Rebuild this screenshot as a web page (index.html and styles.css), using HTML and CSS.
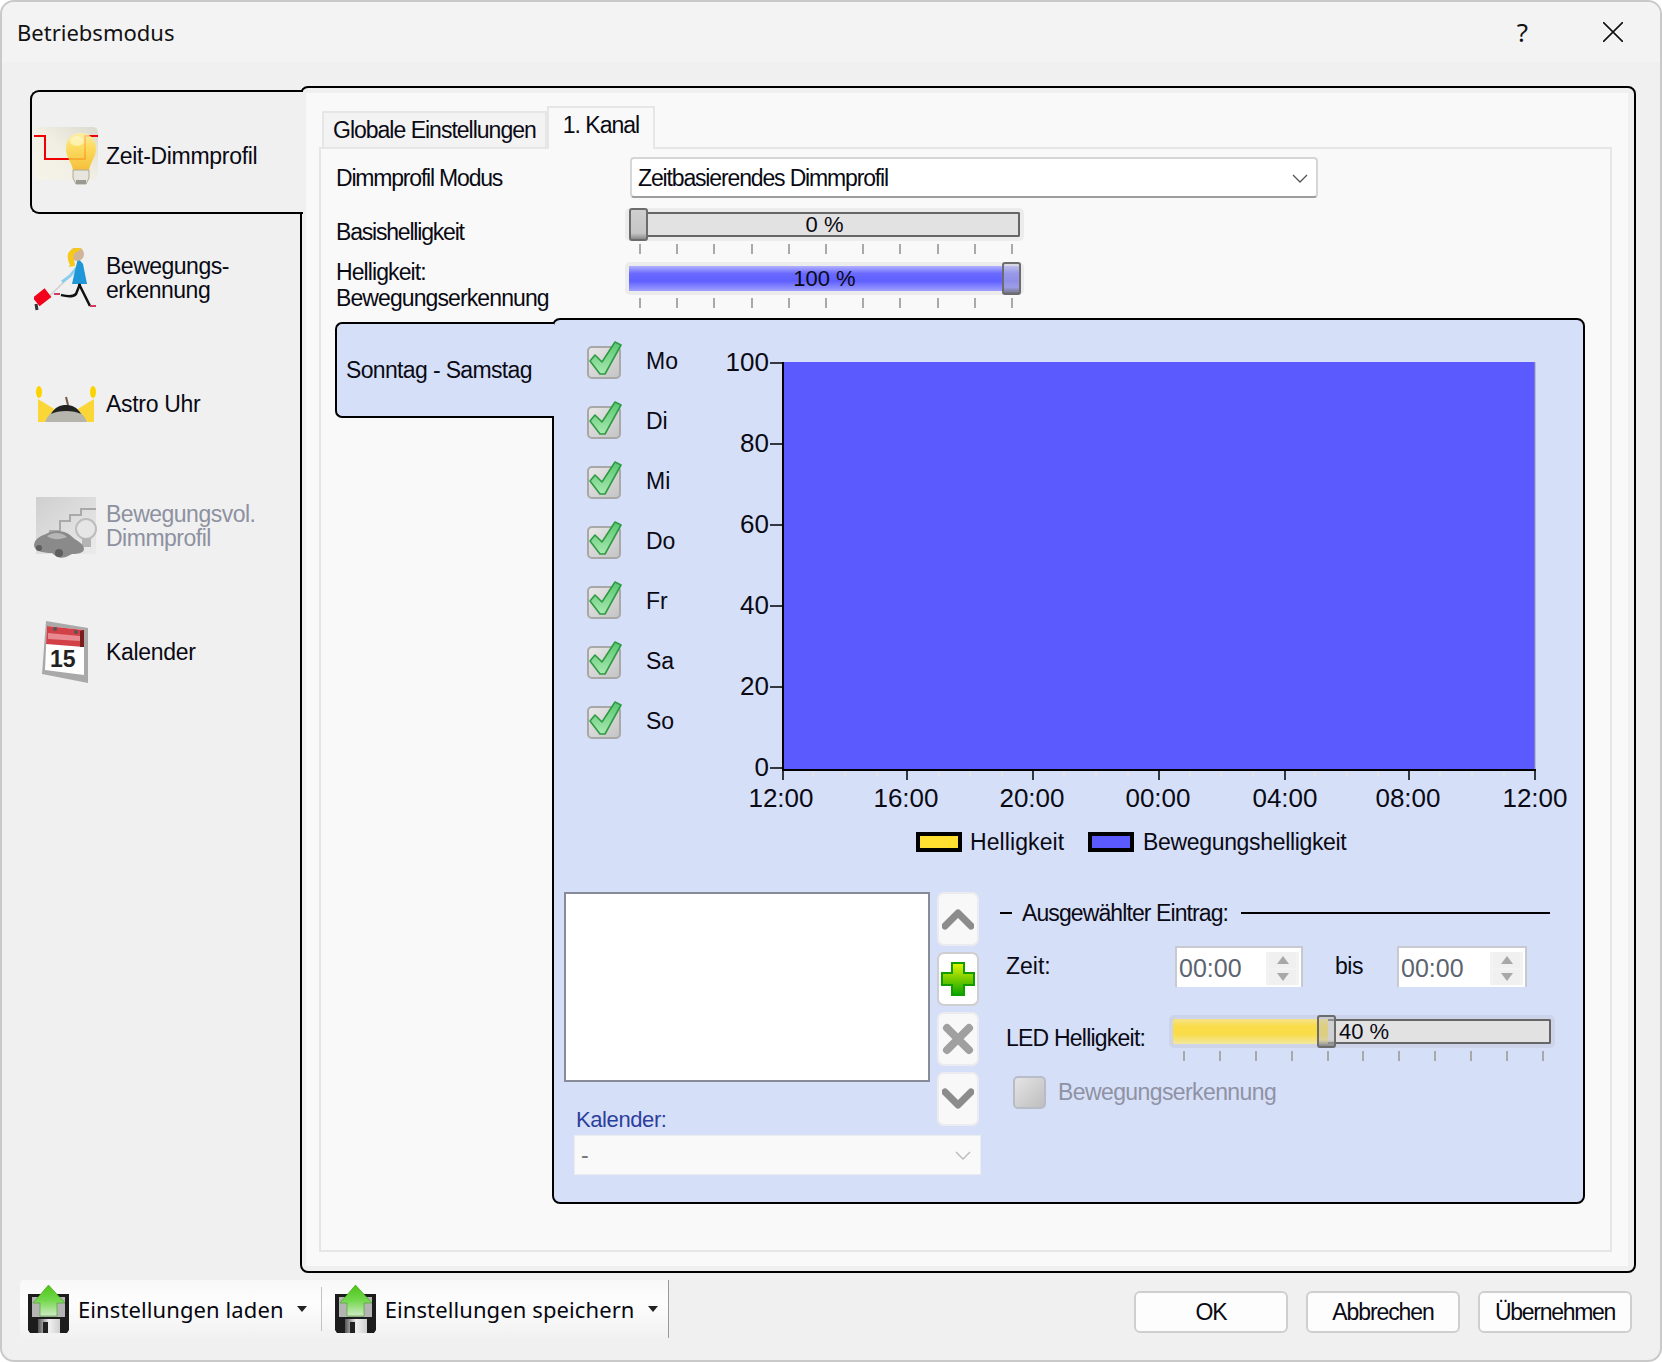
FILE: index.html
```html
<!DOCTYPE html>
<html lang="de">
<head>
<meta charset="utf-8">
<title>Betriebsmodus</title>
<link rel="stylesheet" href="styles.css">
</head>
<body>
<svg class="defs" width="0" height="0" aria-hidden="true">
  <defs>
    <linearGradient id="gArrow" x1="0" y1="0" x2="0" y2="1"><stop offset="0" stop-color="#4cc414"/><stop offset=".5" stop-color="#74d84e"/><stop offset="1" stop-color="#cfeac6"/></linearGradient>
    <linearGradient id="gPlus" x1="0" y1="0" x2="0" y2="1"><stop offset="0" stop-color="#e6f500"/><stop offset="1" stop-color="#09a400"/></linearGradient>
    <linearGradient id="gBulb" x1="0" y1="0" x2="0" y2="1"><stop offset="0" stop-color="#fff0a0"/><stop offset=".35" stop-color="#ffdc50"/><stop offset="1" stop-color="#f6b820"/></linearGradient>
    <linearGradient id="gIconBg" x1="0" y1="1" x2="1" y2="0"><stop offset="0" stop-color="#f6f4e8"/><stop offset=".5" stop-color="#f1efe3"/><stop offset="1" stop-color="#dcd9ce"/></linearGradient>
    <linearGradient id="gGrey" x1="0" y1="0" x2="1" y2="1"><stop offset="0" stop-color="#cfcfcf"/><stop offset="1" stop-color="#ebebeb"/></linearGradient>
    <linearGradient id="gCheckBox" x1="0" y1="0" x2="1" y2="1"><stop offset="0" stop-color="#e8e8e8"/><stop offset="1" stop-color="#c4c4c4"/></linearGradient>
    <linearGradient id="gCheck" x1="0" y1="0" x2="0" y2="1"><stop offset="0" stop-color="#58c870"/><stop offset="1" stop-color="#a8e8b0"/></linearGradient>
    <linearGradient id="gShutter" x1="0" y1="0" x2="1" y2="0"><stop offset="0" stop-color="#555"/><stop offset=".5" stop-color="#f0f0f0"/><stop offset="1" stop-color="#cfcfcf"/></linearGradient>
    <symbol id="floppy" viewBox="0 0 41 48">
      <path d="M0 9H41V45L39 48H2L0 45z" fill="#1c1c1c"/>
      <path d="M4 12H37V32H4z" fill="#b4b4b4"/>
      <path d="M10 34H32V48H10z" fill="url(#gShutter)"/>
      <path d="M15 37H20V48H15z" fill="#222"/>
      <path d="M20.5 0 37 18H29V31H12V18H5z" fill="url(#gArrow)" stroke="#3f9e1a" stroke-width=".6"/>
    </symbol>
    <symbol id="check" viewBox="0 0 36 38">
      <rect x="1" y="6" width="32" height="31" rx="4" fill="url(#gCheckBox)" stroke="#a8a8a8" stroke-width="2"/>
      <path d="M3 20 8 14 15 21 28 1 34 4 18 33H13z" fill="url(#gCheck)" stroke="#2f9a44" stroke-width="1.6" stroke-linejoin="round"/>
    </symbol>
  </defs>
</svg>

<div class="window">
  <header class="titlebar">
    <span class="title">Betriebsmodus</span>
    <div class="title-controls">
      <span class="help">?</span>
      <svg class="close" width="20" height="20" viewBox="0 0 20 20"><path d="M0 0 20 20M20 0 0 20" stroke="#111" stroke-width="1.6" fill="none"/></svg>
    </div>
  </header>

  <div class="body">
    <nav class="sidebar">
      <div class="side-item active">
        <svg class="side-icon" width="64" height="64" viewBox="0 0 64 64">
          <rect y="3" width="64" height="53" rx="5" fill="url(#gIconBg)"/>
          <path d="M0 12H11V35H51V12H64" fill="none" stroke="#f00000" stroke-width="2"/>
          <path d="M32 25C32 14 39 9 47 9S62 14 62 25C62 33 57 37 55 46H39C37 37 32 33 32 25z" fill="url(#gBulb)" opacity=".86"/>
          <ellipse cx="43" cy="17" rx="7" ry="5" fill="#fff8c8" opacity=".7"/>
          <path d="M39 46H55V54L52 60H42L39 54z" fill="#e6e6de" stroke="#b2a890"/>
          <path d="M42 56H52V60H42z" fill="#9a9a92"/>
        </svg>
        <span class="side-label">Zeit-Dimmprofil</span>
      </div>
      <div class="side-item">
        <svg class="side-icon" width="64" height="64" viewBox="0 0 64 64">
          <path d="M37 26 29 35 8 55" stroke="#cfcfcf" stroke-width="1.5" fill="none"/>
          <path d="M46 16 36 28 28 34" stroke="#8dcdec" stroke-width="3" fill="none"/>
          <rect x="1" y="44" width="15" height="11" transform="rotate(-38 8 50)" fill="#f2001c"/>
          <path d="M2 56 3 62" stroke="#333" stroke-width="3"/>
          <path d="M44 10 40 27 38 36H53L49 16z" fill="#1e96d8"/>
          <ellipse cx="43" cy="6" rx="7" ry="7" fill="#d0b498"/>
          <path d="M47 0C39-1 32 3 34 11 34 15 38 17 34 19L41 18C41 12 37 9 41 5 44 2 47 3 47 0z" fill="#f6c817"/>
          <path d="M46 36 42 46C38 50 31 48 27 47" stroke="#111" stroke-width="2.5" fill="none"/>
          <path d="M45 36 56 58" stroke="#111" stroke-width="2.5" fill="none"/>
          <path d="M56 58H62" stroke="#d03a60" stroke-width="2"/>
          <path d="M26 46H20" stroke="#d03a60" stroke-width="2"/>
        </svg>
        <span class="side-label two">Bewegungs-<br>erkennung</span>
      </div>
      <div class="side-item">
        <svg class="side-icon" width="64" height="64" viewBox="0 0 64 64">
          <path d="M4 27 30 43 10 50H4zM60 27 34 43 54 50H60z" fill="#fbd637"/>
          <ellipse cx="5" cy="20" rx="3" ry="6" fill="#fbd400"/>
          <ellipse cx="59" cy="20" rx="3" ry="6" fill="#fbd400"/>
          <path d="M32 25 34 33" stroke="#7a5a48" stroke-width="2"/>
          <path d="M11 50C16 38 26 34 32 34S48 38 53 50z" fill="#b5b5ae"/>
          <path d="M17 42C21 35 26 33 32 33S43 35 47 42C40 38 24 38 17 42z" fill="#222"/>
        </svg>
        <span class="side-label">Astro Uhr</span>
      </div>
      <div class="side-item disabled">
        <svg class="side-icon" width="64" height="64" viewBox="0 0 64 64">
          <rect x="2" y="1" width="60" height="57" fill="url(#gGrey)"/>
          <path d="M16 39V35H26V25H36V19H47V13H62" fill="none" stroke="#a9a9a9" stroke-width="2"/>
          <circle cx="52" cy="33" r="10" fill="#e6e6e6" stroke="#bdbdbd" stroke-width="2"/>
          <path d="M48 42H57V51H48z" fill="#b4b4b4"/>
          <path d="M0 49C1 42 7 40 12 38 18 34 30 34 36 39 42 45 50 47 50 53 50 57 44 58 38 58L32 61C26 63 22 61 18 57 8 57 0 55 0 49z" fill="#8a8a8a"/>
          <path d="M13 40C19 36 28 36 33 41 26 44 18 44 13 40z" fill="#b6b6b6"/>
          <circle cx="25" cy="57" r="4" fill="#5e5e5e"/>
          <circle cx="5" cy="52" r="3" fill="#5e5e5e"/>
        </svg>
        <span class="side-label two">Bewegungsvol.<br>Dimmprofil</span>
      </div>
      <div class="side-item">
        <svg class="side-icon" width="64" height="64" viewBox="0 0 64 64">
          <path d="M12 1 54 8V63L8 54z" fill="#a9a9a9"/>
          <path d="M13 6 50 10V55L11 50z" fill="#fff"/>
          <path d="M13 6 50 10V27L12 24z" fill="#d24048"/>
          <path d="M46 11 50 10V27L46 27z" fill="#7a1d1d"/>
          <path d="M14 13 46 16V21L14 19z" fill="#e88a90"/>
          <circle cx="21" cy="9" r="2" fill="#555"/><circle cx="42" cy="12" r="2" fill="#555"/>
          <text class="cal-day" x="16" y="47">15</text>
        </svg>
        <span class="side-label">Kalender</span>
      </div>
    </nav>

    <main class="main-panel">
      <div class="main-inner">
        <div class="tabs">
          <div class="tab">Globale Einstellungen</div>
          <div class="tab current">1. Kanal</div>
        </div>
        <div class="page">
          <div class="form-row combo-row">
            <label class="form-label">Dimmprofil Modus</label>
            <div class="combo main-combo">
              <span>Zeitbasierendes Dimmprofil</span>
              <svg width="16" height="9" viewBox="0 0 16 9"><path d="M1 1 8 8 15 1" fill="none" stroke="#555" stroke-width="1.3"/></svg>
            </div>
          </div>
          <div class="form-row slider-row">
            <label class="form-label">Basishelligkeit</label>
            <div class="slider wide">
              <div class="track">
                <span class="track-text centered">0 %</span>
              </div>
              <span class="thumb at-start"></span>
              <div class="ticks"><i></i><i></i><i></i><i></i><i></i><i></i><i></i><i></i><i></i><i></i><i></i></div>
            </div>
          </div>
          <div class="form-row slider-row">
            <label class="form-label two-line">Helligkeit:<br>Bewegungserkennung</label>
            <div class="slider wide">
              <div class="track">
                <div class="fill blue" style="width:100%"></div>
                <span class="track-text centered">100 %</span>
              </div>
              <span class="thumb at-end"></span>
              <div class="ticks"><i></i><i></i><i></i><i></i><i></i><i></i><i></i><i></i><i></i><i></i><i></i></div>
            </div>
          </div>

          <div class="schedule">
            <div class="day-tab">Sonntag - Samstag</div>
            <section class="schedule-panel">
              <div class="schedule-top">
                <ul class="days">
                  <li><svg width="36" height="38"><use href="#check"/></svg><span>Mo</span></li>
                  <li><svg width="36" height="38"><use href="#check"/></svg><span>Di</span></li>
                  <li><svg width="36" height="38"><use href="#check"/></svg><span>Mi</span></li>
                  <li><svg width="36" height="38"><use href="#check"/></svg><span>Do</span></li>
                  <li><svg width="36" height="38"><use href="#check"/></svg><span>Fr</span></li>
                  <li><svg width="36" height="38"><use href="#check"/></svg><span>Sa</span></li>
                  <li><svg width="36" height="38"><use href="#check"/></svg><span>So</span></li>
                </ul>
                <svg class="chart" width="880" height="530" viewBox="0 0 880 530">
                  <rect x="84" y="22" width="751" height="407" fill="#5a5aff"/>
                  <path d="M835 22V429" stroke="#9a9ab0" stroke-width="1"/>
                  <g stroke="#e6e6e0" stroke-width="1.5">
                    <path d="M113 430v7M145 430v7M177 430v7M239 430v7M270 430v7M302 430v7M364 430v7M396 430v7M428 430v7M490 430v7M521 430v7M553 430v7M615 430v7M647 430v7M678 430v7M740 430v7M772 430v7M804 430v7"/>
                  </g>
                  <path d="M83 22V430H836" fill="none" stroke="#000" stroke-width="2"/>
                  <g stroke="#000" stroke-width="1.5">
                    <path d="M70 23H83M70 104H83M70 185H83M70 266H83M70 347H83M70 428H83"/>
                    <path d="M83 430v10M207 430v10M333 430v10M459 430v10M585 430v10M709 430v10M835 430v10"/>
                  </g>
                  <g class="axis-y">
                    <text x="69" y="31">100</text>
                    <text x="69" y="112">80</text>
                    <text x="69" y="193">60</text>
                    <text x="69" y="274">40</text>
                    <text x="69" y="355">20</text>
                    <text x="69" y="436">0</text>
                  </g>
                  <g class="axis-x">
                    <text x="81" y="467">12:00</text>
                    <text x="206" y="467">16:00</text>
                    <text x="332" y="467">20:00</text>
                    <text x="458" y="467">00:00</text>
                    <text x="585" y="467">04:00</text>
                    <text x="708" y="467">08:00</text>
                    <text x="835" y="467">12:00</text>
                  </g>
                  <rect x="218" y="494" width="42" height="16" fill="#ffe030" stroke="#000" stroke-width="4"/>
                  <text class="legend first" x="270" y="510">Helligkeit</text>
                  <rect x="390" y="494" width="42" height="16" fill="#5a5aff" stroke="#000" stroke-width="4"/>
                  <text class="legend" x="443" y="510">Bewegungshelligkeit</text>
                </svg>
              </div>

              <div class="schedule-bottom">
                <div class="entries">
                  <div class="entries-top">
                    <div class="entries-list">
                      <div class="listbox"></div>
                      <div class="calendar-label">Kalender:</div>
                    </div>
                    <div class="move-buttons">
                      <button class="tool-btn"><svg width="32" height="22" viewBox="0 0 32 22"><path d="M3 18 16 5 29 18" fill="none" stroke="#8c8c8c" stroke-width="7" stroke-linejoin="round" stroke-linecap="round"/></svg></button>
                      <button class="tool-btn enabled"><svg width="34" height="34" viewBox="0 0 34 34"><path d="M11 1H23V11H33V23H23V33H11V23H1V11H11z" fill="url(#gPlus)" stroke="#119c00" stroke-width="2"/></svg></button>
                      <button class="tool-btn"><svg width="32" height="32" viewBox="0 0 32 32"><path d="M5 5 27 27M27 5 5 27" fill="none" stroke="#a0a0a0" stroke-width="8" stroke-linecap="round"/></svg></button>
                      <button class="tool-btn"><svg width="32" height="22" viewBox="0 0 32 22"><path d="M3 4 16 17 29 4" fill="none" stroke="#8c8c8c" stroke-width="7" stroke-linejoin="round" stroke-linecap="round"/></svg></button>
                    </div>
                  </div>
                  <div class="combo cal-combo">
                    <span>-</span>
                    <svg width="16" height="9" viewBox="0 0 16 9"><path d="M1 1 8 8 15 1" fill="none" stroke="#b8b8b8" stroke-width="1.3"/></svg>
                  </div>
                </div>

                <div class="detail">
                  <div class="group-head"><i class="dash"></i><span>Ausgewählter Eintrag:</span><i class="rule"></i></div>
                  <div class="time-row">
                    <span class="detail-label time-label">Zeit:</span>
                    <div class="spin">
                      <span>00:00</span>
                      <div class="spin-btns"><b class="up"></b><b class="down"></b></div>
                    </div>
                    <span class="bis">bis</span>
                    <div class="spin second">
                      <span>00:00</span>
                      <div class="spin-btns"><b class="up"></b><b class="down"></b></div>
                    </div>
                  </div>
                  <div class="led-row">
                    <span class="detail-label led-label">LED Helligkeit:</span>
                    <div class="slider narrow">
                      <div class="track">
                        <div class="fill yellow" style="width:41%"></div>
                        <span class="track-text led-value">40 %</span>
                      </div>
                      <span class="thumb at-led"></span>
                      <div class="ticks"><i></i><i></i><i></i><i></i><i></i><i></i><i></i><i></i><i></i><i></i><i></i></div>
                    </div>
                  </div>
                  <div class="motion-row">
                    <span class="off-box"></span>
                    <span>Bewegungserkennung</span>
                  </div>
                </div>
              </div>
            </section>
          </div>
        </div>
      </div>
    </main>
  </div>

  <footer class="footer">
    <div class="toolbar">
      <div class="tool-item">
        <svg width="41" height="48"><use href="#floppy"/></svg>
        <span>Einstellungen laden</span>
        <i class="caret"></i>
      </div>
      <i class="tool-sep"></i>
      <div class="tool-item">
        <svg width="41" height="48"><use href="#floppy"/></svg>
        <span>Einstellungen speichern</span>
        <i class="caret"></i>
      </div>
    </div>
    <div class="actions">
      <button class="action">OK</button>
      <button class="action">Abbrechen</button>
      <button class="action tight">Übernehmen</button>
    </div>
  </footer>
</div>
</body>
</html>
```

FILE: styles.css
```css
* { box-sizing: border-box; }
html, body { margin: 0; padding: 0; background: #fff; }
body { width: 1662px; height: 1362px; overflow: hidden; font-family: "Liberation Sans", Arial, sans-serif; font-size: 23px; color: #0a0a14; }
.defs { position: absolute; }

.window { width: 1662px; height: 1362px; display: flex; flex-direction: column; border: 2px solid #c9c9c9; border-radius: 14px; background: #f0f0f0; overflow: hidden; }

.titlebar { height: 60px; flex: none; display: flex; align-items: center; justify-content: space-between; background: #f3f3f3; padding: 0 37px 0 15px; }
.title { font-family: "Noto Sans", sans-serif; font-size: 22px; color: #111; }
.title-controls { display: flex; align-items: center; gap: 75px; }
.help { font-family: "Noto Sans", sans-serif; font-size: 26px; color: #111; }

.body { height: 1187px; flex: none; margin-top: 24px; display: flex; padding-left: 28px; }

.sidebar { width: 270px; flex: none; padding-top: 4px; position: relative; z-index: 2; }
.side-item { height: 124px; margin-right: -3px; display: flex; align-items: center; padding: 7px 0 0 2px; gap: 8px; line-height: 24px; border: 2px solid transparent; border-right: 0; }
.side-item.active { border-color: #000; border-radius: 9px 0 0 9px; background: #f0f0f0; }
.side-item.disabled { color: #8d91a0; }
.side-icon { flex: none; }
.side-label { font-size: 23px; letter-spacing: -0.3px; }
.side-label.two { letter-spacing: -0.5px; padding-bottom: 4px; }
.cal-day { font: bold 23px "Liberation Sans", sans-serif; fill: #222; }

.main-panel { width: 1336px; flex: none; height: 1187px; border: 2px solid #000; border-radius: 8px; padding: 5px 6px 5px 4px; background: #f0f0f0; }
.main-inner { height: 100%; background: #f9f9f9; padding: 13px 16px 14px 13px; display: flex; flex-direction: column; }

.tabs { display: flex; align-items: flex-end; padding-left: 3px; height: 41px; flex: none; letter-spacing: -1px; }
.tab { height: 36px; padding: 0 9px; display: flex; align-items: center; background: #f3f3f3; border: 2px solid #e6e6e6; border-bottom: 0; }
.tab.current { height: 43px; padding: 0 14px 6px; background: #f9f9f9; margin-bottom: -2px; position: relative; z-index: 1; }

.page { flex: 1; border: 2px solid #e6e6e6; padding-top: 8px; }

.form-row { display: flex; align-items: center; padding-left: 15px; }
.form-label { width: 289px; flex: none; padding-top: 2px; letter-spacing: -1.2px; }
.form-label.two-line { line-height: 26px; letter-spacing: -0.9px; padding-top: 0; }
.combo-row { height: 41px; margin-bottom: 10px; }
.slider-row { height: 46px; margin-bottom: 8px; }

.combo { display: flex; align-items: center; justify-content: space-between; }
.main-combo { width: 688px; height: 41px; margin-left: 5px; padding: 2px 8px 0 6px; background: #fff; border: 2px solid #d6d6d6; border-bottom-color: #9d9d9d; border-radius: 4px; letter-spacing: -1.15px; }

.slider { position: relative; flex: none; }
.slider.wide { width: 399px; }
.slider.narrow { width: 386px; }
.track { position: relative; height: 33px; border: 4px solid #ececec; background: #e2e2e2; box-shadow: inset 0 0 0 2px #666; border-radius: 5px; overflow: hidden; }
.narrow .track { border-color: #cdd3e8; }
.fill { height: 100%; }
.fill.blue { background: linear-gradient(#b2b2ff, #6a6aff 30%, #5f5fff 60%, #a0a0ff); }
.fill.yellow { background: linear-gradient(#f6e28a, #f9dc48 30%, #f9dc48 60%, #f4e8a0); }
.track-text { position: absolute; top: 0; bottom: 0; display: flex; align-items: center; font-size: 22px; }
.track-text.centered { left: 0; right: 0; justify-content: center; }
.track-text.led-value { left: 166px; }
.thumb { position: absolute; top: 0; width: 19px; height: 33px; border: 2px solid #6c6c6c; border-radius: 3px; background: linear-gradient(#cfcfcf, #c6c6c6 80%, #8a8a8a); }
.thumb.at-start { left: 4px; }
.thumb.at-end { right: 3px; background: linear-gradient(rgba(200,200,220,.55), rgba(170,170,215,.6) 80%, #6c6c86); }
.thumb.at-led { left: 148px; background: linear-gradient(rgba(190,190,190,.45), rgba(190,190,190,.5) 80%, #8a8a8a); }
.ticks { display: flex; justify-content: space-between; padding: 0 11px 0 14px; margin-top: 3px; }
.ticks i { width: 2px; height: 10px; background: #a9a9a9; }

.schedule { display: flex; align-items: flex-start; margin-top: 10px; margin-left: 14px; width: 1250px; }
.day-tab { width: 219px; height: 96px; flex: none; margin-top: 4px; margin-right: -2px; position: relative; z-index: 1; display: flex; align-items: center; padding: 0 0 0 9px; background: #d6dff8; border: 2px solid #000; border-right: 0; border-radius: 7px 0 0 7px; letter-spacing: -0.65px; }

.schedule-panel { flex: 1; height: 886px; border: 2px solid #000; border-radius: 8px; background: #d6dff8; }
.schedule-top { height: 572px; display: flex; align-items: flex-start; padding-top: 10px; padding-left: 33px; }
.days { list-style: none; margin: 0; padding: 0; width: 113px; flex: none; }
.days li { height: 60px; display: flex; align-items: center; }
.days svg { flex: none; margin-right: 23px; }
.days span { padding-top: 3px; }
.chart { flex: none; margin-top: 10px; }
.axis-y text { font-size: 26px; text-anchor: end; fill: #0a0a14; }
.axis-x text { font-size: 26px; text-anchor: middle; fill: #0a0a14; }
.legend { font-size: 23px; fill: #0a0a14; letter-spacing: -0.33px; }
.legend.first { letter-spacing: 0.1px; }

.schedule-bottom { display: flex; align-items: flex-start; padding-left: 10px; }
.entries { width: 417px; flex: none; }
.entries-top { display: flex; align-items: flex-start; }
.entries-list { width: 366px; flex: none; }
.listbox { height: 190px; background: #fff; border: 2px solid #878c98; }
.calendar-label { margin-top: 25px; padding-left: 12px; color: #2c3f9c; font-size: 22px; line-height: 26px; letter-spacing: -0.4px; }
.move-buttons { display: flex; flex-direction: column; gap: 6px; margin-left: 7px; }
.tool-btn { width: 42px; height: 54px; padding: 0; display: flex; align-items: center; justify-content: center; background: #f8f8f8; border: 2px solid #ececf0; border-radius: 7px; }
.tool-btn.enabled { background: #fff; border-color: #cfcfd2; }
.cal-combo { width: 407px; height: 40px; margin-left: 10px; margin-top: 2px; padding: 0 9px 0 6px; background: #f9f9f9; border: 1px solid #ecedf2; color: #777; }

.detail { width: 550px; flex: none; margin-left: 19px; }
.group-head { display: flex; align-items: center; height: 26px; margin-top: 8px; gap: 10px; letter-spacing: -0.9px; }
.dash { width: 12px; height: 2px; background: #000; flex: none; }
.rule { flex: 1; height: 2px; background: #000; margin-left: 3px; }
.detail-label { flex: none; padding-left: 6px; }
.time-row { display: flex; align-items: center; height: 41px; margin-top: 20px; }
.time-label { width: 175px; }
.spin { width: 128px; height: 41px; flex: none; display: flex; align-items: flex-start; justify-content: space-between; padding: 4px 2px 0 2px; background: #fff; border: 2px solid #c9c9d2; border-bottom: 0; color: #5c6470; font-size: 25px; }
.spin.second { width: 130px; }
.spin span { line-height: 32px; }
.spin-btns { width: 33px; height: 33px; display: flex; flex-direction: column; gap: 2px; background: #f3f3f3; padding: 0 3px; }
.spin-btns b { flex: 1; display: flex; align-items: center; justify-content: center; background: #f0f0f0; }
.spin-btns b::before { content: ""; border-left: 6px solid transparent; border-right: 6px solid transparent; }
.up::before { border-bottom: 8px solid #a8a8a8; }
.down::before { border-top: 8px solid #a8a8a8; }
.bis { width: 94px; padding-left: 32px; flex: none; letter-spacing: -0.5px; }
.led-row { display: flex; align-items: center; height: 46px; margin-top: 28px; }
.led-label { width: 169px; letter-spacing: -0.78px; }
.motion-row { display: flex; align-items: center; margin-top: 15px; padding-left: 13px; gap: 12px; color: #8f92a4; letter-spacing: -0.6px; }
.off-box { width: 33px; height: 33px; border-radius: 5px; border: 2px solid #b8bcc8; background: linear-gradient(135deg, #e4e4e4, #bebebe); }

.footer { flex: 1; display: flex; align-items: flex-start; justify-content: space-between; padding: 7px 28px 0 18px; }
.toolbar { width: 649px; height: 58px; display: flex; align-items: center; padding-left: 8px; background: linear-gradient(#f8f8f8, #fdfdfd 40%, #f1f1f1); border-right: 1px solid #9a9a9a; border-radius: 4px 0 0 4px; }
.tool-item { display: flex; align-items: center; gap: 9px; font-family: "Noto Sans", sans-serif; font-size: 22px; letter-spacing: 0.1px; color: #06060f; }
.tool-item svg { flex: none; }
.caret { width: 0; height: 0; margin-left: 4px; border-left: 5px solid transparent; border-right: 5px solid transparent; border-top: 6px solid #222; }
.tool-sep { width: 1px; height: 44px; margin: 0 13px 0 14px; background: #c4c4c4; }
.actions { display: flex; gap: 18px; margin-top: 11px; }
.action { width: 154px; height: 42px; font: 23px "Liberation Sans", sans-serif; letter-spacing: -1.1px; color: #0a0a14; background: #fdfdfd; border: 2px solid #cfcfcf; border-radius: 6px; padding: 0; }
.action.tight { letter-spacing: -1.3px; }
```
